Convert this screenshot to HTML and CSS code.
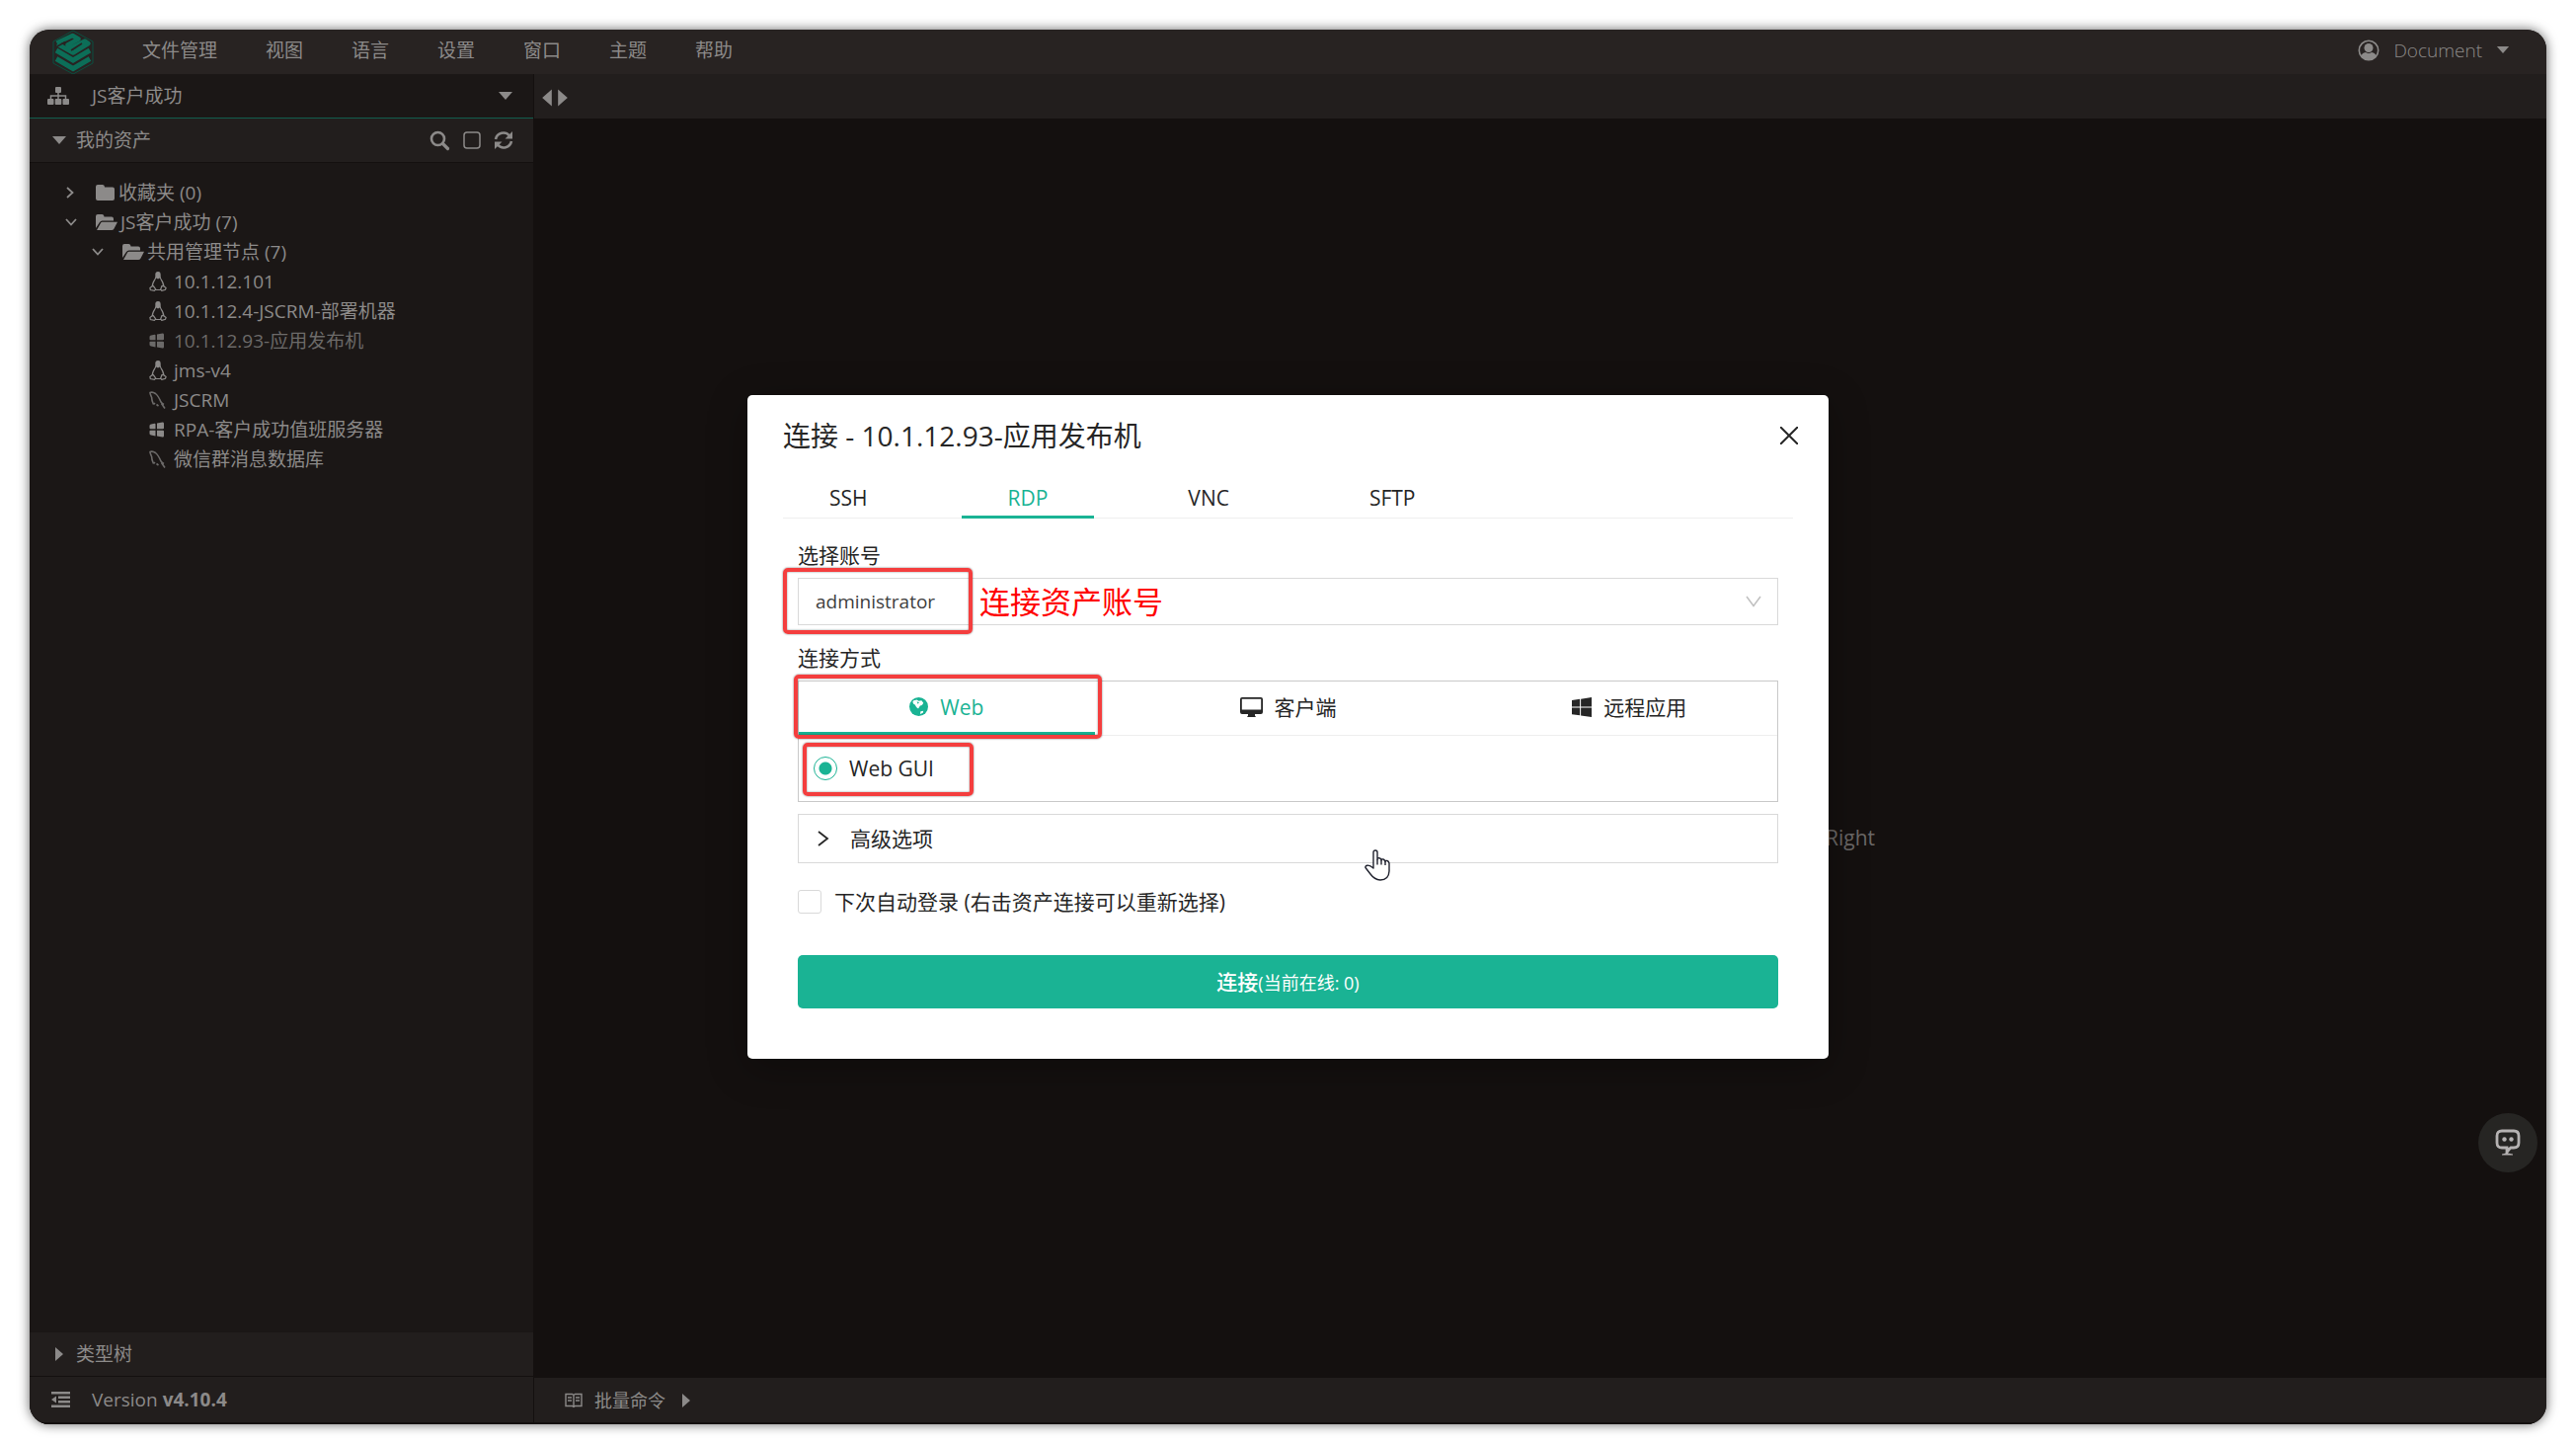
FILE: index.html
```html
<!DOCTYPE html>
<html lang="zh-CN">
<head>
<meta charset="utf-8">
<meta name="viewport" content="width=device-width, initial-scale=1">
<title>JumpServer - Luna</title>
<link rel="stylesheet" href="styles.css">
</head>
<body>
<svg class="sprite" aria-hidden="true">
  <symbol id="i-linux" viewBox="0 0 18 20">
    <path fill="currentColor" d="M9 0C6.900 0 6.200 1.500 6.300 3.300 6.400 5.600 6.300 6.300 5 8.300 3.600 10.400 2.700 12.600 2.700 14.800L4.200 15.400C3.900 12.900 4.800 11 6 9L7.200 6.600 9 7.400 10.900 6.500 12 9C13.300 11 14 12.800 13.700 15.200L15.400 14.800C15.400 12.500 14.400 10.300 13 8.300 11.700 6.400 11.700 5.300 11.700 3.300 11.700 1.200 11 0 9 0Z"/>
    <path fill="none" stroke="currentColor" stroke-width="1.200" d="M3.500 14.500 .9 16.400 1.300 18.500 5.400 19.300 6.700 17.900 4.500 14.800ZM14.500 14.500 17.100 16.500 16.500 18.200 12.800 19.400 11.700 18 12.900 14.600ZM6.500 18.500H12"/>
  </symbol>
  <symbol id="i-windows" viewBox="0 0 16 16">
    <path fill="currentColor" d="M0 2.300 6.500 1.400V7.600H0ZM7.300 1.300 16 0V7.600H7.300ZM0 8.400H6.500V14.600L0 13.700ZM7.300 8.400H16V16L7.300 14.700Z"/>
  </symbol>
  <symbol id="i-host" viewBox="0 0 16 16">
    <path fill="currentColor" d="M2 2.500 5.500 1.700Q6.500 1.600 6.500 2.600V7.300H1.500Q.5 7.300 .5 6.300V4Q.5 2.700 2 2.500ZM8 1.600 13.500 .5Q15 .4 15 1.800V6.300Q15 7.300 14 7.300H8ZM.5 9.500Q.5 8.700 1.500 8.700H6.500V14.400L2 13.600Q.5 13.300 .5 12ZM8 8.700H14Q15 8.700 15 9.700V14.300Q15 15.700 13.500 15.500L8 14.600Z"/>
  </symbol>
  <symbol id="i-mysql" viewBox="0 0 18 18">
    <path fill="none" stroke="currentColor" stroke-width="1.600" d="M4.500 13.500C3.500 11 2.500 9 2.700 6.500 2 4.500 .8 2.800 1 1.500 3 .5 5 1.500 6.500 2.500 9 4.500 10.500 7.500 12 11 13 12.500 14 13 15 13.500M12.500 12.500 16 17.500M4.500 13.500 6 12M7.500 13.500 9.500 15"/>
  </symbol>
  <symbol id="i-folder" viewBox="0 0 20 18">
    <path fill="currentColor" d="M0 3Q0 1 2 1H7Q9 1 9 3.500H17Q19 3.500 19 5.500V15Q19 17 17 17H2Q0 17 0 15Z"/>
  </symbol>
  <symbol id="i-folder-open" viewBox="0 0 22 18">
    <path fill="currentColor" d="M0 15V3Q0 1 2 1H6.500Q8.500 1 8.500 3.500H16Q18 3.500 18 5.500V7.500H6.500Q5 7.500 4 9ZM1 17 5 9.700Q5.500 8.800 6.500 8.800H22L18.500 15.500Q17.700 17 16 17Z"/>
  </symbol>
  <symbol id="i-chevron" viewBox="0 0 12 12">
    <path fill="none" stroke="currentColor" stroke-width="1.800" d="M2 1 7.500 6 2 11"/>
  </symbol>
  <symbol id="i-chevron-down" viewBox="0 0 12 12">
    <path fill="none" stroke="currentColor" stroke-width="1.800" d="M1 3 6 8.500 11 3"/>
  </symbol>
  <symbol id="i-tri-right" viewBox="0 0 10 16"><path fill="currentColor" d="M1 1 9 8 1 15Z"/></symbol>
  <symbol id="i-tri-left" viewBox="0 0 10 16"><path fill="currentColor" d="M9 1 1 8 9 15Z"/></symbol>
  <symbol id="i-tri-down" viewBox="0 0 16 10"><path fill="currentColor" d="M1 1H15L8 9Z"/></symbol>
</svg>

<div class="app">
  <header class="menubar">
    <a class="logo" href="#" aria-label="JumpServer">
      <svg viewBox="0 0 42 46" width="42" height="46">
        <path fill="none" stroke="#0b4f40" stroke-width="1" d="M21 1 41 12V34L21 45 1 34V12Z"/>
        <g fill="none" stroke="#0c6e58" stroke-linejoin="round">
          <path stroke-width="4.600" d="M4.500 13.500 20.500 6 26.500 9.500 15.500 15.500 20.500 18 33 11.500 36.500 14 21 23.500 5 14.500"/>
          <path stroke-width="5" stroke-linejoin="miter" d="M4 21 21 31 38 21M4 29.500 21 39.500 38 29.500"/>
        </g>
        <path fill="none" stroke="#282322" stroke-width="1.500" d="M4 17.500 13 12.500M19 21 30 14"/>
      </svg>
    </a>
    <nav class="menu">
      <button type="button">文件管理</button>
      <button type="button">视图</button>
      <button type="button">语言</button>
      <button type="button">设置</button>
      <button type="button">窗口</button>
      <button type="button">主题</button>
      <button type="button">帮助</button>
    </nav>
    <button type="button" class="user">
      <svg viewBox="0 0 22 22" width="22" height="22"><circle cx="11" cy="11" r="9.700" fill="none" stroke="currentColor" stroke-width="1.600"/><circle cx="11" cy="8.500" r="4.500" fill="currentColor"/><path fill="currentColor" d="M3.500 17Q4 13.500 8 13Q11 14.800 14 13Q18 13.500 18.500 17Q15 21 11 21T3.500 17Z"/></svg>
      <span>Document</span>
      <svg width="14" height="9"><use href="#i-tri-down"/></svg>
    </button>
  </header>

  <div class="body">
    <aside class="sidebar">
      <button type="button" class="org">
        <svg viewBox="0 0 22 20" width="22" height="20"><path fill="currentColor" d="M9 1H13Q14 1 14 2V6Q14 7 13 7H9Q8 7 8 6V2Q8 1 9 1ZM1 13H5.500Q6.500 13 6.500 14V18Q6.500 19 5.500 19H1Q0 19 0 18V14Q0 13 1 13ZM8.700 13H13.300Q14.300 13 14.300 14V18Q14.300 19 13.300 19H8.700Q7.700 19 7.700 18V14Q7.700 13 8.700 13ZM16.500 13H21Q22 13 22 14V18Q22 19 21 19H16.500Q15.500 19 15.500 18V14Q15.500 13 16.500 13Z"/><path fill="none" stroke="currentColor" stroke-width="1.500" d="M11 6V14M3.500 14V10H18.500V14"/></svg>
        <span>JS客户成功</span>
        <svg width="16" height="10"><use href="#i-tri-down"/></svg>
      </button>
      <div class="assets-head">
        <button type="button" class="head-title">
          <svg width="16" height="10"><use href="#i-tri-down"/></svg>
          <span>我的资产</span>
        </button>
        <button type="button" aria-label="搜索"><svg viewBox="0 0 21 21" width="21" height="21"><circle cx="8.500" cy="8.500" r="6.500" fill="none" stroke="currentColor" stroke-width="2.600"/><path stroke="currentColor" stroke-width="3.200" stroke-linecap="round" d="M13.500 13.500 18.500 18.500"/></svg></button>
        <button type="button" aria-label="选择"><svg viewBox="0 0 18 18" width="18" height="18"><rect x="1" y="1" width="16" height="16" rx="3" fill="none" stroke="currentColor" stroke-width="1.500"/></svg></button>
        <button type="button" aria-label="刷新"><svg viewBox="0 0 20 20" width="20" height="20"><path fill="none" stroke="currentColor" stroke-width="2.600" d="M2 9A8 8 0 0 1 16 5.500M18 11A8 8 0 0 1 4 14.500"/><path fill="currentColor" d="M19 1V8.500H11.500ZM1 19V11.500H8.500Z"/></svg></button>
      </div>
      <ul class="tree">
        <li><svg class="tw" width="12" height="12"><use href="#i-chevron"/></svg><svg class="fd" width="20" height="18"><use href="#i-folder"/></svg><span>收藏夹 (0)</span></li>
        <li><svg class="tw" width="12" height="12"><use href="#i-chevron-down"/></svg><svg class="fd" width="22" height="18"><use href="#i-folder-open"/></svg><span>JS客户成功 (7)</span></li>
        <li class="l1"><svg class="tw" width="12" height="12"><use href="#i-chevron-down"/></svg><svg class="fd" width="22" height="18"><use href="#i-folder-open"/></svg><span>共用管理节点 (7)</span></li>
        <li class="l2"><svg width="18" height="20"><use href="#i-linux"/></svg><span>10.1.12.101</span></li>
        <li class="l2"><svg width="18" height="20"><use href="#i-linux"/></svg><span>10.1.12.4-JSCRM-部署机器</span></li>
        <li class="l2 off"><svg class="host" width="16" height="16"><use href="#i-host"/></svg><span>10.1.12.93-应用发布机</span></li>
        <li class="l2"><svg width="18" height="20"><use href="#i-linux"/></svg><span>jms-v4</span></li>
        <li class="l2"><svg class="db" width="18" height="18"><use href="#i-mysql"/></svg><span>JSCRM</span></li>
        <li class="l2"><svg class="host" width="16" height="16"><use href="#i-host"/></svg><span>RPA-客户成功值班服务器</span></li>
        <li class="l2"><svg class="db" width="18" height="18"><use href="#i-mysql"/></svg><span>微信群消息数据库</span></li>
      </ul>
      <button type="button" class="type-tree">
        <svg width="10" height="16"><use href="#i-tri-right"/></svg>
        <span>类型树</span>
      </button>
      <div class="version">
        <svg viewBox="0 0 19 16" width="19" height="16"><path fill="currentColor" d="M0 0H19V2.500H0ZM7 4.500H19V7H7ZM7 9H19V11.500H7ZM0 13.500H19V16H0ZM5 4.500V11.500L0 8Z"/></svg>
        <span>Version <b>v4.10.4</b></span>
      </div>
    </aside>

    <main class="workspace">
      <div class="tabbar">
        <button type="button" aria-label="向左"><svg width="12" height="20"><use href="#i-tri-left"/></svg></button>
        <button type="button" aria-label="向右"><svg width="12" height="20"><use href="#i-tri-right"/></svg></button>
      </div>
      <div class="stage"><p class="hint">Ctrl + Alt + Right</p></div>
      <button type="button" class="batch">
        <svg viewBox="0 0 18 16" width="18" height="16"><path fill="none" stroke="currentColor" stroke-width="1.400" d="M1 1.500H7.500L9 2.500 10.500 1.500H17V13.500H10.500L9 14.500 7.500 13.500H1ZM9 2.500V14.500M3 5H7M3 8H7M11 5H15M11 8H15"/></svg>
        <span>批量命令</span>
        <svg width="10" height="16"><use href="#i-tri-right"/></svg>
      </button>
    </main>
  </div>

  <button type="button" class="chat" aria-label="聊天助手">
    <svg viewBox="0 0 26 28" width="26" height="28"><path fill="none" stroke="currentColor" stroke-width="2.800" d="M7 2H19Q24 2 24 7V14Q24 19 19 19H16L12 22.500V19H7Q2 19 2 14V7Q2 2 7 2Z"/><circle cx="9.500" cy="10.500" r="2.200" fill="currentColor"/><circle cx="16.500" cy="10.500" r="2.200" fill="currentColor"/><path fill="currentColor" d="M11 19H17L13 24.500 18 25.500V26.500H7V25.500L11 24.500Z"/></svg>
  </button>

  <div class="overlay">
    <section class="dialog" role="dialog" aria-labelledby="dlg-title">
      <div class="dlg-head">
        <h1 id="dlg-title">连接 - 10.1.12.93-应用发布机</h1>
        <button type="button" class="close" aria-label="关闭"><svg viewBox="0 0 18 18" width="18" height="18"><path stroke="currentColor" stroke-width="2" d="M0 0 18 18M18 0 0 18"/></svg></button>
      </div>
      <div class="protocols" role="tablist">
        <button type="button" role="tab">SSH</button>
        <button type="button" role="tab" class="on" aria-selected="true">RDP</button>
        <button type="button" role="tab">VNC</button>
        <button type="button" role="tab">SFTP</button>
      </div>
      <form class="form">
        <label class="lbl" for="account">选择账号</label>
        <div class="select-wrap">
          <select id="account"><option>administrator</option></select>
          <svg class="caret" viewBox="0 0 16 12" width="16" height="12"><path fill="none" stroke="currentColor" stroke-width="1.500" d="M1 1 8 10.500 15 1"/></svg>
          <div class="mark mark-account"></div>
          <p class="note">连接资产账号</p>
        </div>
        <p class="lbl">连接方式</p>
        <div class="methods">
          <div class="method-tabs" role="tablist">
            <button type="button" role="tab" class="on" aria-selected="true">
              <svg viewBox="0 0 20 20" width="19" height="19"><circle cx="10" cy="10" r="10" fill="currentColor"/><path fill="#fff" d="M4.500 3.500 8 2.500 10 4 13 3.500 15 6 13.500 8.500 11.500 9 9.500 12 7.500 10.500 6 8 4.500 7 3.500 5ZM12 15 15 14.500 14.500 16.500 11.500 18Z"/><path fill="currentColor" d="M8 4.500 10.500 5.500 9 7Z"/></svg>
              <span>Web</span>
              <i class="mark mark-web"></i>
            </button>
            <button type="button" role="tab">
              <svg viewBox="0 0 23 20" width="23" height="20"><path fill="currentColor" fill-rule="evenodd" d="M2 0H21Q23 0 23 2V15Q23 17 21 17H15V18.500L16 20H7L8 18.500V17H2Q0 17 0 15V2Q0 0 2 0ZM1.800 1.800V12.500H21.200V1.800Z"/></svg>
              <span>客户端</span>
            </button>
            <button type="button" role="tab">
              <svg width="20" height="20"><use href="#i-windows"/></svg>
              <span>远程应用</span>
            </button>
          </div>
          <label class="radio"><input type="radio" name="method" checked><span>Web GUI</span><i class="mark mark-gui"></i></label>
        </div>
        <button type="button" class="advanced">
          <svg viewBox="0 0 12 16" width="12" height="16"><path fill="none" stroke="currentColor" stroke-width="1.800" d="M1 1 10 8 1 15"/></svg>
          <span>高级选项</span>
        </button>
        <label class="check"><input type="checkbox"><span>下次自动登录 (右击资产连接可以重新选择)</span></label>
        <button type="button" class="submit">连接<small>(当前在线: 0)</small></button>
      </form>
      <svg class="pointer" viewBox="0 0 26 32" width="26" height="32"><path fill="#fff" stroke="#20222e" stroke-width="1.400" stroke-linejoin="round" d="M9 19V3Q9 1 11 1T13 3V10Q13 8.500 15 8.800T17 11Q17.500 9.500 19 10T21 12.500Q21.500 11 23 11.500T25 14V22Q24.500 31 16 31 10 30.500 6 25L1 18.500Q.5 16.500 3 16.200T9 19Z"/><path stroke="#20222e" stroke-width="1.400" d="M13 10V15.500M17 11V15.500M21 12.500V16"/></svg>
    </section>
  </div>
</div>
</body>
</html>
```
FILE: styles.css
```css
* { box-sizing: border-box; }

body {
  margin: 0;
  height: 100vh;
  padding: 30px 30px 20px;
  background: #fff;
  font: 19px/30px "Open Sans", "Noto Sans CJK SC", sans-serif;
  color: #8c8a89;
}

button {
  margin: 0;
  padding: 0;
  border: 0;
  background: none;
  font: inherit;
  color: inherit;
  text-align: left;
}

svg { flex: none; display: block; }
p, h1, ul { margin: 0; padding: 0; font-weight: 400; }
.sprite { position: absolute; width: 0; height: 0; }

.app {
  position: relative;
  height: 100%;
  display: flex;
  flex-direction: column;
  overflow: clip;
  border-radius: 20px;
  background: #14100f;
}
body::before {
  content: "";
  position: absolute;
  inset: 30px 30px 20px;
  border-radius: 20px;
  box-shadow: 0 0 12px rgba(0, 0, 0, .6);
}

/* Menu bar */
.menubar {
  height: 45px;
  display: flex;
  align-items: center;
  padding: 0 37px 0 23px;
  background: #282322;
}
.logo { width: 91px; }
.menu { flex: 1; display: flex; gap: 49px; padding-bottom: 3px; }
.user { display: flex; align-items: center; gap: 14px; padding-bottom: 4px; font-weight: 300; }

.body { flex: 1; min-height: 0; display: flex; }

/* Sidebar */
.sidebar {
  width: 511px;
  flex: none;
  display: flex;
  flex-direction: column;
  background: #1b1716;
  border-right: 1px solid #14100f;
}
.org {
  height: 45px;
  display: flex;
  align-items: center;
  gap: 23px;
  padding: 0 20px 0 18px;
  border-bottom: 1px solid #125e4d;
}
.org span { flex: 1; }
.assets-head {
  height: 45px;
  display: flex;
  align-items: center;
  gap: 13px;
  padding: 0 20px 0 22px;
  background: #221e1d;
  border-bottom: 1px solid #14100f;
}
.head-title { flex: 1; display: flex; align-items: center; gap: 9px; }
.tree { flex: 1; padding-top: 15px; list-style: none; }
.tree li { height: 30px; display: flex; align-items: center; padding-left: 36px; }
.tree .l1 { padding-left: 63px; }
.tree .l2 { padding-left: 121px; gap: 7px; }
.tree .host { width: 18px; padding-right: 2px; }
.tree .db { color: #6c6a69; }
.tree .off { color: #6c6a69; }
.tree .tw { margin-right: 19px; }
.tree .fd { margin-right: 3px; }
.type-tree {
  height: 45px;
  display: flex;
  align-items: center;
  gap: 12px;
  padding-left: 25px;
  background: #221e1d;
  border-bottom: 1px solid #14100f;
}
.version {
  height: 48px;
  display: flex;
  align-items: center;
  gap: 22px;
  padding-left: 22px;
  background: #221e1d;
  border-bottom: 2px solid #14100f;
}

/* Workspace */
.workspace { flex: 1; display: flex; flex-direction: column; }
.tabbar {
  height: 45px;
  display: flex;
  align-items: center;
  gap: 4px;
  padding: 3px 0 0 7px;
  background: #221e1d;
}
.stage { flex: 1; display: grid; place-items: center; }
.hint { width: 678px; margin-top: 180px; text-align: right; font-size: 21px; color: #6a6766; }
.batch {
  height: 47px;
  display: flex;
  align-items: center;
  gap: 12px;
  padding-left: 31px;
  background: #221e1d;
  border-bottom: 2px solid #14100f;
  font-size: 18px;
}
.batch svg:last-child { margin-left: 4px; }
.chat {
  position: absolute;
  right: 9px;
  bottom: 255px;
  width: 60px;
  height: 60px;
  display: grid;
  place-items: center;
  border-radius: 50%;
  background: #262523;
  color: #b5b2b2;
}

/* Dialog */
.overlay { position: absolute; inset: 0; display: grid; place-items: center; }
.dialog {
  position: relative;
  width: 1095px;
  padding: 22px 36px 51px;
  border-radius: 5px;
  background: #fff;
  color: #262626;
  font-size: 21px;
  box-shadow: 0 9px 40px rgba(0, 0, 0, .3);
}
.dlg-head { display: flex; justify-content: space-between; align-items: center; margin-right: -5px; }
.dlg-head h1 { font-size: 28px; line-height: 38px; }
.protocols { display: flex; gap: 48px; height: 42px; margin: 23px 0 22px; border-bottom: 1px solid #eee; }
.protocols button { height: 42px; padding: 3px 47px 0; border-bottom: 3px solid transparent; }
.protocols .on, .method-tabs .on { color: #1ab394; border-bottom-color: #1ab394; }
.form { padding: 0 15px; display: flex; flex-direction: column; }
.lbl { line-height: 30px; }
.select-wrap { position: relative; margin: 8px 0 18px; }
select {
  display: block;
  width: 100%;
  height: 48px;
  padding: 0 17px;
  appearance: none;
  border: 1px solid #d9d9d9;
  border-radius: 0;
  background: #fff;
  font: inherit;
  font-size: 19px;
  color: #404040;
}
.caret { position: absolute; right: 17px; top: 18px; color: #bfbfbf; }
.mark { position: absolute; border: 4px solid #f43e3e; border-radius: 5px; box-shadow: 0 0 2px rgba(0, 0, 0, .6), inset 0 0 2px rgba(0, 0, 0, .5); }
.mark-account { left: -15px; top: -10px; width: 192px; height: 67px; }
.note { position: absolute; left: 184px; top: 4px; font-size: 31px; line-height: 40px; color: #f00; }
.methods { margin-top: 8px; border: 1px solid #c9c9c9; }
.method-tabs { display: flex; gap: 46px; border-bottom: 1px solid #eee; }
.method-tabs button {
  position: relative;
  flex: 1;
  height: 54px;
  display: flex;
  align-items: center;
  justify-content: center;
  gap: 12px;
  border-bottom: 3px solid transparent;
}
.mark-web { left: -5px; top: -7px; width: 312px; height: 65px; }
.radio { position: relative; height: 66px; display: flex; align-items: center; gap: 12px; padding-left: 15px; }
.radio input {
  appearance: none;
  width: 24px;
  height: 24px;
  margin: 0;
  border: 1px solid #1ab394;
  border-radius: 50%;
  background: radial-gradient(circle, #1ab394 6px, #fff 7px);
}
.mark-gui { left: 4px; top: 7px; width: 173px; height: 54px; }
.advanced {
  height: 50px;
  margin-top: 12px;
  display: flex;
  align-items: center;
  gap: 21px;
  padding-left: 19px;
  border: 1px solid #d9d9d9;
}
.check { display: flex; align-items: center; gap: 13px; margin: 24px 0 39px; }
.check input {
  appearance: none;
  width: 24px;
  height: 24px;
  margin: 0;
  border: 1px solid #d9d9d9;
  border-radius: 3px;
}
.submit {
  height: 54px;
  border-radius: 5px;
  background: #1ab394;
  color: #fff;
  text-align: center;
  font-weight: 500;
}
.submit small { font-size: 18px; font-weight: 400; }
.pointer { position: absolute; left: 625px; top: 460px; }
```
